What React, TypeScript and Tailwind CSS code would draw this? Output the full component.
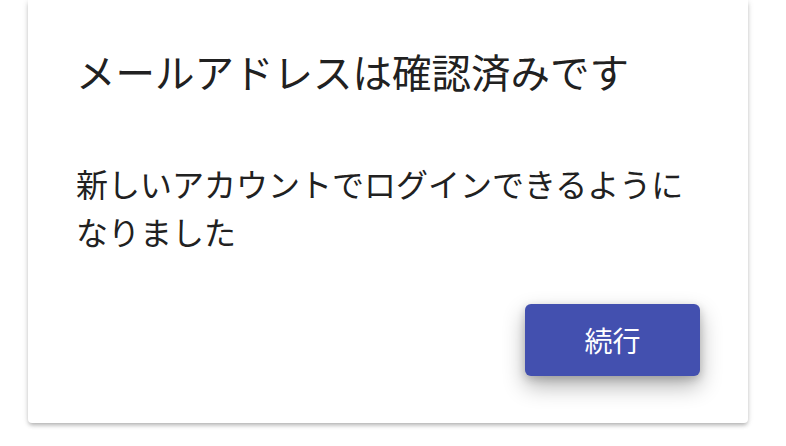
export default function App() {
  return (
    <div className="min-h-[446px] w-[786px] bg-white pl-[28px] font-['Noto_Sans_CJK_JP',sans-serif]">
      <div className="w-[720px] rounded-b-[4px] bg-white px-[48px] pb-[47px] pt-[39px] shadow-[0_3px_4px_-1px_rgba(0,0,0,0.25),0_1px_6px_0_rgba(0,0,0,0.12)]">
        <h2 className="text-[39.5px] leading-[64px] font-normal text-[#212121]">メールアドレスは確認済みです</h2>
        <p className="mt-[56px] text-[32px] leading-[48px] text-[#212121]">
          新しいアカウントでログインできるようになりました
        </p>
        <div className="mt-[49px] flex justify-end">
          <button
            type="button"
            className="flex h-[72px] w-[175px] items-center justify-center rounded-[6px] bg-[#4350af] text-[28px] text-white shadow-[0_10px_22px_rgba(0,0,0,0.3),0_3px_8px_rgba(0,0,0,0.18)]"
          >
            続行
          </button>
        </div>
      </div>
    </div>
  );
}
